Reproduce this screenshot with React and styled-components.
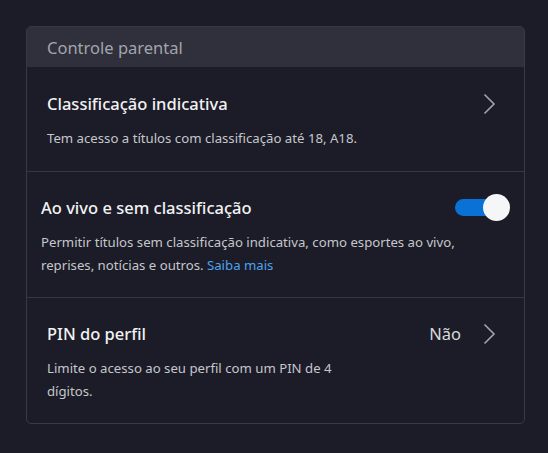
import React from 'react';
import styled, { createGlobalStyle } from 'styled-components';

const GlobalStyle = createGlobalStyle`
  html, body {
    margin: 0;
    padding: 0;
    background: #1b1c27;
  }
  body {
    font-family: "Noto Sans", "Open Sans", sans-serif;
  }
`;

const Page = styled.div`
  padding: 26px 23px 30px 26px;
`;

const Card = styled.section`
  width: 499px;
  box-sizing: border-box;
  border: 1px solid #383944;
  border-radius: 5px;
  overflow: hidden;
  background: #1b1c27;
`;

const CardHeader = styled.header`
  height: 40px;
  display: flex;
  align-items: center;
  padding-left: 20px;
  background: #2f303b;
  color: #a3a4ab;
  font-size: 16.5px;
`;

const Row = styled.div`
  display: flex;
  align-items: flex-start;
  justify-content: space-between;
  padding: ${(p) => (p.$first ? '25px 14px 20px' : '24px 14px 19px')};
  padding-left: ${(p) => p.$inset}px;
  border-top: ${(p) => (p.$first ? 'none' : '1px solid #363741')};
`;

const Info = styled.div`
  display: flex;
  flex-direction: column;
  gap: 11px;
  max-width: ${(p) => p.$max || 470}px;
`;

const Title = styled.h3`
  margin: 0;
  line-height: 24px;
  font-size: 16.5px;
  font-weight: 500;
  color: #f2f2f4;
`;

const Desc = styled.p`
  margin: 0;
  line-height: 23.5px;
  font-size: 13.2px;
  color: #c6c7cc;

  a {
    color: #4ea3ee;
    text-decoration: none;
  }
`;

const Side = styled.div`
  flex-shrink: 0;
  display: flex;
  align-items: center;
  gap: 22px;
  padding-right: 14px;
  height: 24px;
  color: #d8d9dc;
  font-size: 16.5px;
`;

const Chevron = styled.svg`
  width: 13px;
  height: 22px;
`;

const Toggle = styled.div`
  position: relative;
  flex-shrink: 0;
  width: 55px;
  height: 27px;
  margin-top: -2px;

  &::before {
    content: '';
    position: absolute;
    left: 0;
    top: 5px;
    width: 44px;
    height: 17px;
    border-radius: 9px;
    background: #0a72d6;
  }
  &::after {
    content: '';
    position: absolute;
    right: 0;
    top: 0;
    width: 27px;
    height: 27px;
    border-radius: 50%;
    background: #f6f6f8;
  }
`;

function ChevronIcon() {
  return (
    <Chevron viewBox="0 0 13 22">
      <path d="M1.5 1.5 L11 11 L1.5 20.5" fill="none" stroke="#a2a3aa" strokeWidth="1.6" />
    </Chevron>
  );
}

export default function App() {
  return (
    <Page>
      <GlobalStyle />
      <Card>
        <CardHeader>Controle parental</CardHeader>
        <Row $first $inset={20}>
          <Info>
            <Title>Classificação indicativa</Title>
            <Desc>Tem acesso a títulos com classificação até 18, A18.</Desc>
          </Info>
          <Side>
            <ChevronIcon />
          </Side>
        </Row>
        <Row $inset={14}>
          <Info>
            <Title>Ao vivo e sem classificação</Title>
            <Desc>
              Permitir títulos sem classificação indicativa, como esportes ao vivo, reprises, notícias e
              outros. <a href="#saiba">Saiba mais</a>
            </Desc>
          </Info>
          <Toggle />
        </Row>
        <Row $inset={20}>
          <Info $max={310}>
            <Title>PIN do perfil</Title>
            <Desc>Limite o acesso ao seu perfil com um PIN de 4 dígitos.</Desc>
          </Info>
          <Side>
            <span>Não</span>
            <ChevronIcon />
          </Side>
        </Row>
      </Card>
    </Page>
  );
}
